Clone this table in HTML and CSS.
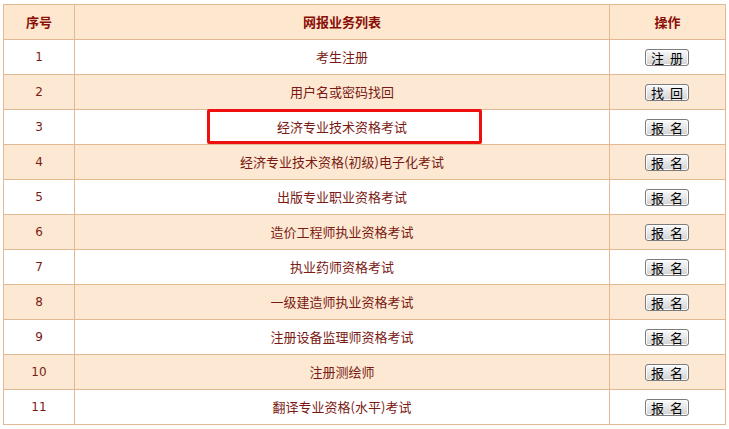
FILE: index.html
```html
<!DOCTYPE html>
<html lang="zh-CN">
<head>
<meta charset="utf-8">
<link rel="stylesheet" href="styles.css">
</head>
<body>
<div class="wrap">
<table class="list">
  <thead>
    <tr><th class="c1">序号</th><th class="c2">网报业务列表</th><th class="c3">操作</th></tr>
  </thead>
  <tbody>
    <tr><td class="num">1</td><td>考生注册</td><td><button class="btn">注&nbsp;&nbsp;册</button></td></tr>
    <tr class="alt"><td class="num">2</td><td>用户名或密码找回</td><td><button class="btn">找&nbsp;&nbsp;回</button></td></tr>
    <tr><td class="num">3</td><td class="hl-cell"><span class="hl"></span>经济专业技术资格考试</td><td><button class="btn">报&nbsp;&nbsp;名</button></td></tr>
    <tr class="alt"><td class="num">4</td><td>经济专业技术资格(初级)电子化考试</td><td><button class="btn">报&nbsp;&nbsp;名</button></td></tr>
    <tr><td class="num">5</td><td>出版专业职业资格考试</td><td><button class="btn">报&nbsp;&nbsp;名</button></td></tr>
    <tr class="alt"><td class="num">6</td><td>造价工程师执业资格考试</td><td><button class="btn">报&nbsp;&nbsp;名</button></td></tr>
    <tr><td class="num">7</td><td>执业药师资格考试</td><td><button class="btn">报&nbsp;&nbsp;名</button></td></tr>
    <tr class="alt"><td class="num">8</td><td>一级建造师执业资格考试</td><td><button class="btn">报&nbsp;&nbsp;名</button></td></tr>
    <tr><td class="num">9</td><td>注册设备监理师资格考试</td><td><button class="btn">报&nbsp;&nbsp;名</button></td></tr>
    <tr class="alt"><td class="num">10</td><td>注册测绘师</td><td><button class="btn">报&nbsp;&nbsp;名</button></td></tr>
    <tr><td class="num">11</td><td>翻译专业资格(水平)考试</td><td><button class="btn">报&nbsp;&nbsp;名</button></td></tr>
  </tbody>
</table>
</div>
</body>
</html>
```
FILE: styles.css
```css
html, body {
  margin: 0;
  padding: 0;
  background: #ffffff;
}
.wrap {
  padding: 4px 0 0 3px;
}
.list {
  border-collapse: collapse;
  width: 723px;
  table-layout: fixed;
  font-family: "Noto Sans CJK SC", "Noto Sans", sans-serif;
  font-size: 13px;
  color: #7a1a14;
}
.list th, .list td {
  border: 1px solid #e3b993;
  height: 34px;
  padding: 0;
  text-align: center;
  vertical-align: middle;
  line-height: 16px;
}
.list th {
  background: #fde7cf;
  color: #8a0e06;
  font-weight: bold;
}
.c1 { width: 70px; }
.c3 { width: 115px; }
.list tr.alt td {
  background: #fde9d3;
}
.num {
  font-family: "DejaVu Sans", Verdana, sans-serif;
  font-size: 12px;
  color: #7a1a14;
}
.hl-cell {
  position: relative;
}
.hl {
  position: absolute;
  left: 132px;
  top: -1px;
  width: 269px;
  height: 29px;
  border: 3px solid #ee0f0f;
  border-radius: 2px;
}
.btn {
  width: 44px;
  height: 17px;
  padding: 0;
  margin: 0 0 0 -1px;
  font-family: "Noto Sans CJK SC", sans-serif;
  font-size: 13px;
  line-height: 13px;
  color: #000;
  border: 1px solid #7b7b7b;
  border-radius: 3px;
  background: linear-gradient(#fbfbfb, #e2e2e2 60%, #d2d2d2);
  box-shadow: inset 0 0 0 1px #ffffff;
  vertical-align: middle;
}
```
